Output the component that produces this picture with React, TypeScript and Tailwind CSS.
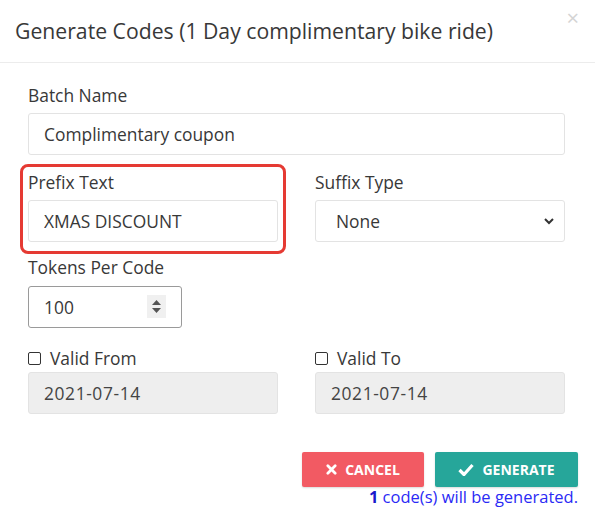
import { useState } from 'react'

// Generate codes modal
export default function App() {
  const [batchName, setBatchName] = useState('Complimentary coupon')
  const [prefix, setPrefix] = useState('XMAS DISCOUNT')
  const [tokens, setTokens] = useState('100')

  const inputCls =
    'h-[42px] w-full rounded-[3px] border border-[#e3e3e3] bg-white px-[15px] text-[17.4px] text-[#383838] outline-none'

  return (
    <div className="h-[524px] w-[595px] bg-white text-[#383838]" style={{ fontFamily: '"Open Sans", sans-serif' }}>
      {/* header */}
      <div className="relative flex h-[63px] items-center border-b border-[#ececec] pl-[15px]">
        <h1 className="text-[21.2px] leading-none text-[#383838]">Generate Codes (1 Day complimentary bike ride)</h1>
        <span className="absolute right-[16px] top-[6px] text-[22px] leading-none text-[#d4d4d4]">×</span>
      </div>

      {/* body */}
      <div className="pl-[28px] pr-[30px] pt-[20px]">
        <label className="block text-[17.4px] leading-[24px]">Batch Name</label>
        <input className={`${inputCls} mt-[6px]`} value={batchName} onChange={(e) => setBatchName(e.target.value)} />

        <div className="mt-[9px] grid grid-cols-2 gap-[37px]">
          <div className="-mx-[8px] rounded-[8px] border-[3px] border-[#e53a33] px-[5px] pb-[9px] pt-[3px]">
            <label className="block text-[17.4px] leading-[24px]">Prefix Text</label>
            <input className={`${inputCls} mt-[6px]`} value={prefix} onChange={(e) => setPrefix(e.target.value)} />
          </div>
          <div className="pt-[6px]">
            <label className="block text-[17.4px] leading-[24px]">Suffix Type</label>
            <div className="relative mt-[6px]">
              <select className={`${inputCls} appearance-none pl-[20px]`} defaultValue="none">
                <option value="none">None</option>
              </select>
              <svg className="pointer-events-none absolute right-[10px] top-[16px] h-[10px] w-[12px]" viewBox="0 0 12 10">
                <path d="M2 3l4 4 4-4" fill="none" stroke="#333" strokeWidth="2" />
              </svg>
            </div>
          </div>
        </div>

        <label className="mt-[1px] block text-[17.4px] leading-[24px]">Tokens Per Code</label>
        <div className="relative mt-[7px] w-[154px]">
          <input
            className="h-[42px] w-full rounded-[3px] border border-[#9a9a9a] bg-white px-[15px] text-[17.4px] text-[#383838] outline-none"
            value={tokens}
            onChange={(e) => setTokens(e.target.value)}
          />
          <div className="absolute left-[119px] top-[9px] flex h-[23px] w-[19px] flex-col items-center justify-center gap-[3px] bg-[#f0f0f0]">
            <svg className="h-[5px] w-[9px]" viewBox="0 0 9 5"><path d="M0 5L4.5 0 9 5z" fill="#555" /></svg>
            <svg className="h-[5px] w-[9px]" viewBox="0 0 9 5"><path d="M0 0L4.5 5 9 0z" fill="#555" /></svg>
          </div>
        </div>

        <div className="mt-[18px] grid grid-cols-2 gap-[37px]">
          {['Valid From', 'Valid To'].map((label) => (
            <div key={label}>
              <label className="flex items-center gap-[9px] text-[17.4px] leading-[24px]">
                <span className="h-[13px] w-[13px] rounded-[2px] border border-[#333] bg-white" />
                {label}
              </label>
              <div className="mt-[2px] flex h-[42px] items-center rounded-[3px] border border-[#e3e3e3] bg-[#eeeeee] px-[15px] text-[17.4px] tracking-[0.6px] text-[#444]">
                2021-07-14
              </div>
            </div>
          ))}
        </div>
      </div>

      {/* footer */}
      <div className="mt-[38px] flex flex-col items-end pr-[17px]">
        <div className="flex gap-[11px]">
          <button className="flex h-[35px] w-[122px] items-center justify-center gap-[8px] rounded-[2px] bg-[#f25a63] text-[14px] font-bold text-white shadow-[0_1px_2px_rgba(0,0,0,0.15)]">
            <svg className="h-[11px] w-[11px]" viewBox="0 0 12 12">
              <path d="M2 2l8 8M10 2l-8 8" stroke="#fff" strokeWidth="3" strokeLinecap="round" />
            </svg>
            CANCEL
          </button>
          <button className="flex h-[35px] w-[143px] items-center justify-center gap-[8px] rounded-[2px] bg-[#26a69a] text-[14px] font-bold text-white shadow-[0_1px_2px_rgba(0,0,0,0.15)]">
            <svg className="h-[13px] w-[16px]" viewBox="0 0 16 13">
              <path d="M1.5 7l4.5 4.5L14.5 2" fill="none" stroke="#fff" strokeWidth="3.2" strokeLinejoin="round" />
            </svg>
            GENERATE
          </button>
        </div>
        <p className="mt-[0px] text-[16.5px] leading-[20px] text-[#2a2af5]">
          <span className="font-bold text-[#1a1acc]">1</span> code(s) will be generated.
        </p>
      </div>
    </div>
  )
}
